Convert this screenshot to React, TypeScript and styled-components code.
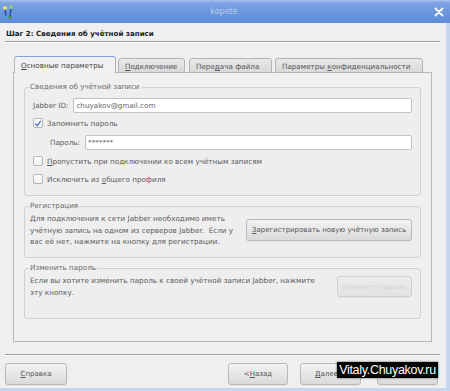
import React from "react";
import styled, { createGlobalStyle } from "styled-components";

const Global = createGlobalStyle`
  html, body { margin: 0; padding: 0; }
  body { width: 450px; height: 391px; overflow: hidden; background: #efefef;
    font-family: "DejaVu Sans", "Noto Sans", sans-serif; }
  * { box-sizing: border-box; }
  u { text-decoration: underline; text-underline-offset: 1px; }
`;

const Window = styled.div`
  width: 450px; height: 391px; display: flex; flex-direction: column;
  position: relative; background: #efefef;
`;

const TitleBar = styled.div`
  height: 23px; flex: none; display: flex; align-items: center;
  padding: 0 6px 0 2px;
  background: linear-gradient(#a9c3ee 0px, #7ea4e4 3px, #6c96dc 12px, #5f8bd7 23px);
`;

const TitleText = styled.div`
  flex: 1; text-align: center; font-size: 8px; color: #b9cdf0;
  margin-top: -1px;
`;

const Frame = styled.div`
  flex: 1; display: flex; flex-direction: column;
  border-right: 4px solid #c6d6ef; border-bottom: 3px solid #c6d6ef;
  padding: 0 6px 0 5px;
`;

const Header = styled.div`
  margin-top: 6px; font-size: 7.1px; line-height: 10px; font-weight: bold;
  color: #1a1a1a; padding-left: 1px;
`;

const Sep = styled.div<{ $mt: number }>`
  margin-top: ${(p) => p.$mt}px; height: 2px;
  border-top: 1px solid #9c9c9c; border-bottom: 1px solid #fafafa;
`;

const TabArea = styled.div`
  margin: 14px 0 0 8px; width: 419px; display: flex; flex-direction: column;
`;

const TabRow = styled.div`
  display: flex; align-items: flex-end; height: 16px; padding-left: 1px;
  position: relative; z-index: 1; margin-bottom: -1px;
`;

const Tab = styled.div<{ $w: number; $ml: number; $active?: boolean }>`
  width: ${(p) => p.$w}px; margin-left: ${(p) => p.$ml}px;
  height: ${(p) => (p.$active ? 17 : 15)}px;
  font-size: 7.2px; line-height: 13px; padding-left: 6px; white-space: nowrap;
  color: ${(p) => (p.$active ? "#444" : "#555")};
  border: 1px solid #b4b4b4; border-bottom: ${(p) => (p.$active ? "none" : "1px solid #b4b4b4")};
  border-top: 1px solid ${(p) => (p.$active ? "#7fa3da" : "#b4b4b4")};
  border-radius: 3px 3px 0 0;
  background: ${(p) => (p.$active ? "#f1f1f1" : "linear-gradient(#e9e9e9, #d9d9d9)")};
  padding-top: ${(p) => (p.$active ? 2 : 1)}px;
`;

const Panel = styled.div`
  height: 270px; border: 1px solid #b8b8b8; background: #f0f0f0;
  padding: 9px 10px 0 10px; display: flex; flex-direction: column; gap: 5px;
`;

const Group = styled.fieldset<{ $h: number }>`
  margin: 0; min-width: 0; height: ${(p) => p.$h}px;
  border: 1px solid #d0d0d0; border-radius: 3px;
  padding: 0 8px 6px 8px; background: #eeeeee;
`;

const Legend = styled.legend`
  font-size: 7.2px; line-height: 10px; color: #6a6a6a;
  padding: 0 1px; margin-left: -4px;
`;

const FormRows = styled.div`
  display: flex; flex-direction: column; padding-top: 4px;
`;

const Row = styled.div<{ $indent?: number; $h?: number }>`
  height: ${(p) => p.$h ?? 18}px; display: flex; align-items: center;
  padding-left: ${(p) => p.$indent ?? 0}px; gap: 5px;
  font-size: 7.2px; color: #5a5a5a;
`;

const Input = styled.div`
  flex: 1; height: 15px; background: #fff; border: 1px solid #c2c2c2;
  border-radius: 2px; font-size: 7.2px; line-height: 13px; padding-left: 2px;
  color: #666;
`;

const Check = styled.span`
  width: 10px; height: 10px; flex: none; border: 1px solid #b6b6b6;
  border-radius: 2px; background: linear-gradient(#ffffff, #f0f0f0);
  display: inline-flex; align-items: center; justify-content: center;
`;

const CheckRow = styled(Row)`
  gap: 4px;
`;

const InfoRow = styled.div`
  display: flex; align-items: center; justify-content: space-between;
  padding-top: 2px;
`;

const Info = styled.div<{ $top?: boolean }>`
  font-size: 7.25px; line-height: 11.5px; color: #5c5c5c; white-space: nowrap;
  margin-left: -3px; align-self: ${(p) => (p.$top ? "flex-start" : "center")};
`;

const Button = styled.div<{ $w: number; $disabled?: boolean; $ml?: number; $mr?: number }>`
  width: ${(p) => p.$w}px; height: ${(p) => (p.$disabled ? 21 : 22)}px; flex: none;
  margin-left: ${(p) => p.$ml ?? 0}px; margin-right: ${(p) => p.$mr ?? 0}px;
  border: 1px solid ${(p) => (p.$disabled ? "#d0d0d0" : "#b9b9b9")}; border-radius: 3px;
  background: ${(p) => (p.$disabled ? "linear-gradient(#ececec, #e2e2e2)" : "linear-gradient(#f3f3f3, #dadada)")};
  display: flex; align-items: center; justify-content: center;
  font-size: 7px; color: ${(p) => (p.$disabled ? "#d4d4d4" : "#555")}; white-space: nowrap;
  box-shadow: 0 1px 0 rgba(0,0,0,0.05);
`;

const Footer = styled.div`
  margin-top: 7px; display: flex; align-items: center;
`;

const Spacer = styled.div` flex: 1; `;

const Watermark = styled.div`
  position: absolute; left: 337px; top: 362px; width: 101px; height: 16px;
  background: #050505; color: #fff; font-family: "Liberation Sans", Arial, sans-serif;
  font-size: 12.5px; line-height: 16px; text-align: center; letter-spacing: -0.3px;
  box-shadow: 0 0 2px rgba(0,0,0,0.6);
`;

const KopeteIcon = () => (
  <svg width="12" height="16" viewBox="0 0 12 16">
    <circle cx="3" cy="4" r="2" fill="#e8e070" />
    <circle cx="9" cy="3" r="2" fill="#8ecf6a" />
    <path d="M3 6 L4 12 M9 5 L8 12" stroke="#2a4fa8" strokeWidth="1.6" />
    <circle cx="4" cy="13" r="1.6" fill="#3cb0d8" />
    <circle cx="8" cy="13" r="1.6" fill="#3d8f3a" />
  </svg>
);

const CloseIcon = () => (
  <svg width="10" height="10" viewBox="0 0 10 10">
    <path d="M1.5 1.5 L8.5 8.5 M8.5 1.5 L1.5 8.5" stroke="#f4f7fc" strokeWidth="2" strokeLinecap="round" />
  </svg>
);

const Tick = () => (
  <svg width="9" height="9" viewBox="0 0 9 9">
    <path d="M1.5 4.8 L3.6 7 L7.6 1.5" stroke="#4d77c2" strokeWidth="1.5" fill="none" />
  </svg>
);

export default function App() {
  return (
    <Window>
      <Global />
      <TitleBar>
        <KopeteIcon />
        <TitleText>kopete</TitleText>
        <CloseIcon />
      </TitleBar>
      <Frame>
        <Header>Шаг 2: Сведения об учётной записи</Header>
        <Sep $mt={2} />
        <TabArea>
          <TabRow>
            <Tab $w={102} $ml={0} $active><u>О</u>сновные параметры</Tab>
            <Tab $w={67} $ml={2}><u>П</u>одключение</Tab>
            <Tab $w={83} $ml={4}>Пере<u>д</u>ача файла</Tab>
            <Tab $w={148} $ml={3}>Параметры <u>к</u>онфиденциальности</Tab>
          </TabRow>
          <Panel>
            <Group $h={114}>
              <Legend>Сведения об учётной записи</Legend>
              <FormRows>
                <Row>
                  <span><u>J</u>abber ID:</span>
                  <Input>chuyakov@gmail.com</Input>
                </Row>
                <CheckRow>
                  <Check><Tick /></Check>
                  <span>Запомнить пароль</span>
                </CheckRow>
                <Row $indent={17} $h={20}>
                  <span>Пароль:</span>
                  <Input>*******</Input>
                </Row>
                <CheckRow>
                  <Check />
                  <span><u>П</u>ропустить при подключении ко всем учётным записям</span>
                </CheckRow>
                <CheckRow>
                  <Check />
                  <span>Исключить из <u>о</u>бщего профиля</span>
                </CheckRow>
              </FormRows>
            </Group>
            <Group $h={57}>
              <Legend>Регистрация</Legend>
              <InfoRow>
                <Info>
                  Для подключения к сети Jabber необходимо иметь<br />
                  учётную запись на одном из серверов Jabber.&nbsp; Если у<br />
                  вас её нет, нажмите на кнопку для регистрации.
                </Info>
                <Button $w={166}><u>З</u>арегистрировать новую учётную запись</Button>
              </InfoRow>
            </Group>
            <Group $h={56}>
              <Legend>Изменить пароль</Legend>
              <InfoRow>
                <Info $top>
                  Если вы хотите изменить пароль к своей учётной записи Jabber, нажмите<br />
                  эту кнопку.
                </Info>
                <Button $w={75} $disabled>Изменить пароль</Button>
              </InfoRow>
            </Group>
          </Panel>
        </TabArea>
        <Sep $mt={12} />
        <Footer>
          <Button $w={62}><u>С</u>правка</Button>
          <Spacer />
          <Button $w={60}>&lt; <u>Н</u>азад</Button>
          <Button $w={61} $ml={12}><u>Д</u>алее &gt;</Button>
          <Button $w={61} $ml={16} $mr={2} />
        </Footer>
      </Frame>
      <Watermark>Vitaly.Chuyakov.ru</Watermark>
    </Window>
  );
}
